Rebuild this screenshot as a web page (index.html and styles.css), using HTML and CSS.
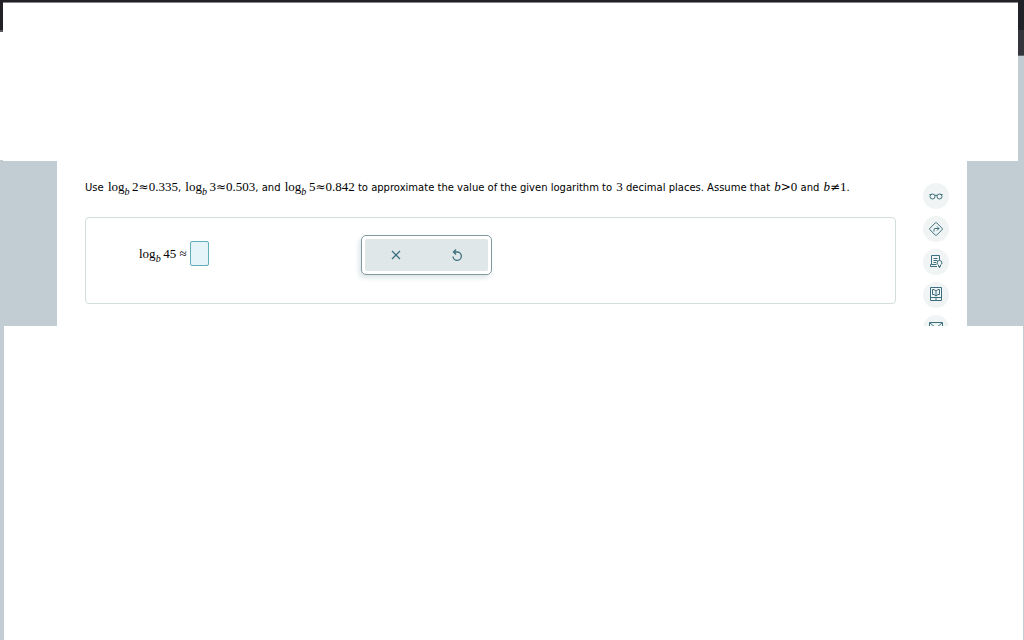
FILE: index.html
```html
<!DOCTYPE html>
<html lang="en">
<head>
<meta charset="utf-8">
<title>Logarithm approximation</title>
<link rel="stylesheet" href="styles.css">
</head>
<body>
<div class="page">
  <header class="top">
    <div class="edge-left"></div>
    <div class="blank"></div>
    <div class="edge-right"></div>
  </header>
  <div class="middle">
    <main class="question">
      <p class="prompt">Use <span class="math">log<sub>b</sub>&thinsp;2<span class="rel">≈</span>0.335</span>, <span class="math">log<sub>b</sub>&thinsp;3<span class="rel">≈</span>0.503</span>, and <span class="math">log<sub>b</sub>&thinsp;5<span class="rel">≈</span>0.842</span> to approximate the value of the given logarithm to <span class="math">3</span> decimal places. Assume that <span class="math"><i>b</i><span class="rel">&gt;</span>0</span> and <span class="math"><i>b</i><span class="rel">≠</span>1</span>.</p>
      <section class="card">
        <div class="answer">
          <label class="math" for="answer">log<sub>b</sub>&thinsp;45 ≈</label>
          <input id="answer" class="box" type="text">
        </div>
        <div class="keypad">
          <button type="button" class="key" aria-label="Clear">
            <svg width="14" height="14" viewBox="0 0 14 14"><path d="M3 3l8 8M11 3l-8 8"/></svg>
          </button>
          <button type="button" class="key" aria-label="Undo">
            <svg width="14" height="14" viewBox="0 0 14 14"><path d="M3.500 4h4a4.200 4.200 0 1 1-4.500 4.500M6 1.500L3.500 4 6 6.500"/></svg>
          </button>
        </div>
      </section>
    </main>
    <nav class="tools">
      <button type="button" class="tool" aria-label="Read">
        <svg width="16" height="16" viewBox="0 0 16 16"><path d="M1.500 6.500h2M12.500 6.500h2M7 7.500q1-1 2 0"/><circle cx="4.500" cy="8.500" r="2.500"/><circle cx="11.500" cy="8.500" r="2.500"/></svg>
      </button>
      <button type="button" class="tool" aria-label="Directions">
        <svg width="16" height="16" viewBox="0 0 16 16"><path d="M7.300 1.900q.7-.6 1.400 0l5.400 5.400q.6.7 0 1.400l-5.400 5.400q-.7.6-1.400 0L1.900 8.700q-.6-.7 0-1.400zM6 10.500V8.500q0-1 1-1h4M9 5.500l2 2-2 2"/></svg>
      </button>
      <button type="button" class="tool" aria-label="Notes">
        <svg width="16" height="16" viewBox="0 0 16 16"><path d="M11.500 6V1.500h-8v9H2.500v2H9M5.500 4.500h4M5.500 6.500h4M5.500 8.500h2.500M3.500 10.500h5M9 9q0-2.500 2.500-2.500T14 9q0 1-1.500 2v1.500h-2V11Q9 10 9 9zM11 13.500h1"/></svg>
      </button>
      <button type="button" class="tool" aria-label="Textbook">
        <svg width="16" height="16" viewBox="0 0 16 16"><path d="M2.500 .5h11v13h-11zM2.500 10.500h11M8 4v5M4.500 2.500v5h1.500L8 9l2-1.500h1.500v-5H10L8 4 6 2.500zM7 12h2"/></svg>
      </button>
      <button type="button" class="tool" aria-label="Message">
        <svg width="16" height="16" viewBox="0 0 16 16"><path d="M1.500 2.500h13v10h-13zM2 3l6 5 6-5"/></svg>
      </button>
    </nav>
  </div>
  <footer class="bottom"></footer>
</div>
</body>
</html>
```
FILE: styles.css
```css
* { box-sizing: border-box; }
body {
  margin: 0;
  background: #fff;
  color: #000;
  font: 10px/20px "DejaVu Sans", Verdana, sans-serif;
}
.page {
  display: grid;
  grid-template-rows: 161px 165px 1fr;
  min-height: 100vh;
}
.top { display: flex; }
.edge-left {
  width: 3px;
  background: linear-gradient(#242126 0 30px, #58595e 30px 32px, #fff 32px 160px, #c1cdd2 160px);
}
.blank {
  flex: 1;
  border-top: 2px solid #242126;
  box-shadow: inset 0 1px #87858a;
}
.edge-right {
  width: 6px;
  background: linear-gradient(#202227 0 30px, #35363c 30px 55px, #5d666b 55px 56px, #c1cdd2 56px);
}
.middle {
  display: flex;
  overflow: hidden;
  border: solid #c1cdd2;
  border-width: 0 57px;
  padding: 16px 18px 0 28px;
}
.question { flex: 1; }
.prompt {
  margin: 0 0 20px;
  height: 20px;
  white-space: nowrap;
}
.math {
  margin-left: 1px;
  font-family: "Liberation Serif", "Times New Roman", serif;
  font-size: 13px;
}
.math sub {
  font-size: 10px;
  font-style: italic;
  line-height: 0;
  vertical-align: -4px;
}
.rel {
  font-family: "DejaVu Sans", sans-serif;
  font-size: 12px;
}
.card {
  display: flex;
  min-height: 87px;
  border: 1px solid #d4dddd;
  border-radius: 4px;
  padding: 17px 52px;
}
.answer {
  display: flex;
  align-items: center;
  gap: 3px;
  width: 223px;
  height: 37px;
}
.box {
  width: 19px;
  height: 25px;
  padding: 0 2px;
  border: 1px solid #60aeb9;
  border-radius: 2px;
  background: #e4f4f8;
}
.keypad {
  display: flex;
  width: 131px;
  height: 40px;
  padding: 3px;
  border: 1px solid #82999f;
  border-radius: 5px;
  box-shadow: -2px 3px 5px #dce5e8;
}
.key {
  display: grid;
  flex: 1;
  place-items: center;
  padding: 0;
  border: 0;
  background: #dfe7e9;
}
.key:first-child { border-radius: 2px 0 0 2px; }
.key:last-child { border-radius: 0 2px 2px 0; }
.tools {
  display: flex;
  flex-direction: column;
  gap: 7px;
  margin: 6px 0 0 27px;
}
.tool {
  display: grid;
  flex: none;
  place-items: center;
  width: 26px;
  height: 26px;
  padding: 0;
  border: 0;
  border-radius: 50%;
  background: #f0f4f5;
}
svg {
  fill: none;
  stroke: #3c707e;
  stroke-width: 1;
}
.key svg { stroke-width: 1.3; }
.bottom {
  border: solid #c1cdd2;
  border-width: 0 1px 0 4px;
}
```
